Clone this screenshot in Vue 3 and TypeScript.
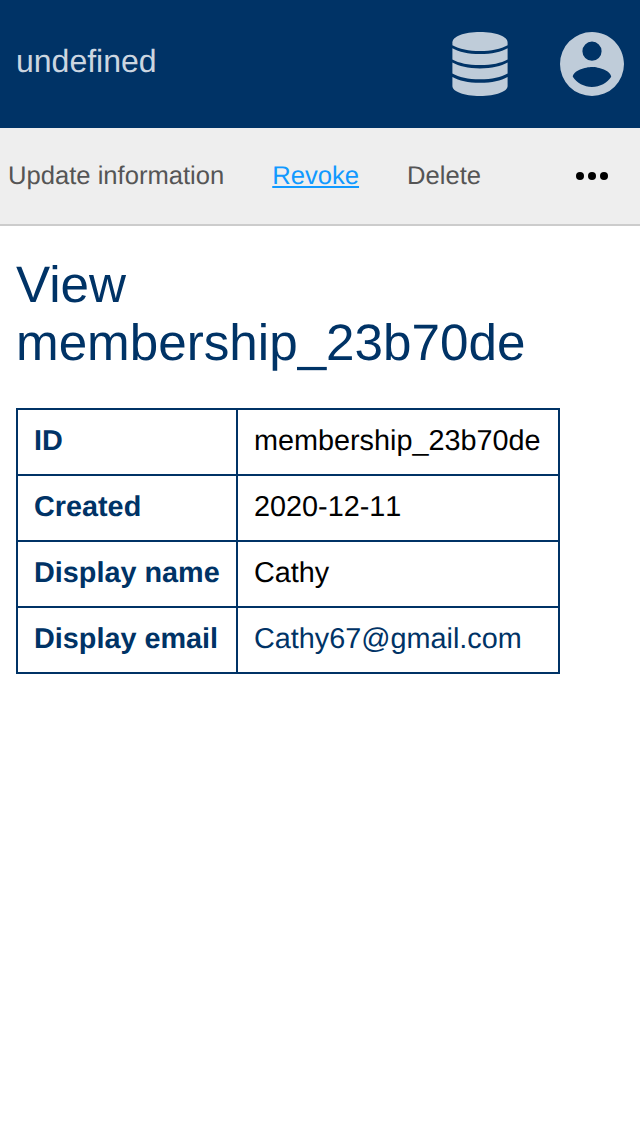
<script setup lang="ts">
interface Field {
  label: string
  value: string
  href?: string
}

interface Action {
  label: string
  active: boolean
}

const actions: Action[] = [
  { label: 'Update information', active: false },
  { label: 'Revoke', active: true },
  { label: 'Delete', active: false },
]

const fields: Field[] = [
  { label: 'ID', value: 'membership_23b70de' },
  { label: 'Created', value: '2020-12-11' },
  { label: 'Display name', value: 'Cathy' },
  { label: 'Display email', value: 'Cathy67@gmail.com', href: 'mailto:Cathy67@gmail.com' },
]
</script>

<template>
  <div class="page">
    <header class="header">
      <span class="brand">undefined</span>
      <div class="header-icons">
        <svg class="icon" viewBox="0 0 64 64" aria-label="Database">
          <path d="M4.4 10.5C4.4 4.5 16 0 32 0S59.6 4.5 59.6 10.5V13.2C53 16.9 43 19 32 19S11 16.9 4.4 13.2Z" />
          <path d="M4.4 16.2C11 20 20 22.1 32 22.1S53 20 59.6 16.2V27.5C53 31.1 44 33.1 32 33.1S11 31.1 4.4 27.5Z" />
          <path d="M4.4 30.6C11 34.3 20 36.4 32 36.4S53 34.3 59.6 30.6V41.5C53 45.2 44 47.3 32 47.3S11 45.2 4.4 41.5Z" />
          <path d="M4.4 45C11 48.7 20 50.8 32 50.8S53 48.7 59.6 45V54C59.6 59.5 48 64 32 64S4.4 59.5 4.4 54Z" />
        </svg>
        <svg class="icon" viewBox="2 2 20 20" aria-label="Account">
          <path d="M12,19.2C9.5,19.2 7.29,17.92 6,16C6.03,14 10,12.9 12,12.9C14,12.9 17.97,14 18,16C16.71,17.92 14.5,19.2 12,19.2M12,5A3,3 0 0,1 15,8A3,3 0 0,1 12,11A3,3 0 0,1 9,8A3,3 0 0,1 12,5M12,2A10,10 0 0,0 2,12A10,10 0 0,0 12,22A10,10 0 0,0 22,12C22,6.47 17.5,2 12,2Z" />
        </svg>
      </div>
    </header>

    <nav class="actions">
      <a v-for="a in actions" :key="a.label" class="action" :class="{ active: a.active }">{{ a.label }}</a>
      <svg class="more" viewBox="0 0 32 8" aria-label="More">
        <circle cx="4" cy="4" r="4" />
        <circle cx="16" cy="4" r="4" />
        <circle cx="28" cy="4" r="4" />
      </svg>
    </nav>

    <main class="content">
      <h1 class="title">View membership_23b70de</h1>
      <table class="details">
        <tbody>
          <tr v-for="f in fields" :key="f.label">
            <th>{{ f.label }}</th>
            <td>
              <a v-if="f.href" class="link" :href="f.href">{{ f.value }}</a>
              <template v-else>{{ f.value }}</template>
            </td>
          </tr>
        </tbody>
      </table>
    </main>
  </div>
</template>

<style>
body {
  margin: 0;
  background: #fff;
}
</style>

<style scoped>
.page {
  min-height: 1136px;
  font-family: 'Liberation Sans', Arial, sans-serif;
  text-rendering: geometricPrecision;
  color: #000;
}

.header {
  display: flex;
  justify-content: space-between;
  box-sizing: border-box;
  height: 128px;
  padding: 32px 16px;
  background: #003366;
}

.brand {
  font-size: 32px;
  line-height: 58px;
  color: #ccd6e0;
}

.header-icons {
  display: flex;
  gap: 48px;
}

.icon {
  width: 64px;
  height: 64px;
  fill: #bfccd9;
}

.actions {
  display: flex;
  align-items: center;
  gap: 48px;
  height: 96px;
  padding: 0 32px 0 8px;
  background: #eee;
  border-bottom: 2px solid #ccc;
}

.action {
  font-size: 25.6px;
  line-height: 30px;
  color: #555;
  white-space: nowrap;
}

.action.active {
  color: #1199ff;
  text-decoration: underline;
  text-decoration-thickness: 2px;
  text-underline-offset: 2px;
}

.more {
  width: 32px;
  height: 8px;
  margin-left: auto;
}

.content {
  padding: 30px 16px;
}

.title {
  margin: 0 0 36px;
  font-size: 51.2px;
  font-weight: 400;
  line-height: 58px;
  color: #003366;
}

.details {
  width: 544px;
  table-layout: fixed;
  border-collapse: collapse;
  font-size: 28.8px;
  line-height: 32px;
  font-kerning: none;
}

.details th,
.details td {
  height: 32px;
  padding: 15px 16px 17px;
  border: 2px solid #003366;
  text-align: left;
  white-space: nowrap;
}

.details th {
  width: 186px;
  color: #003366;
}

.link {
  color: #003366;
  text-decoration: none;
}
</style>
